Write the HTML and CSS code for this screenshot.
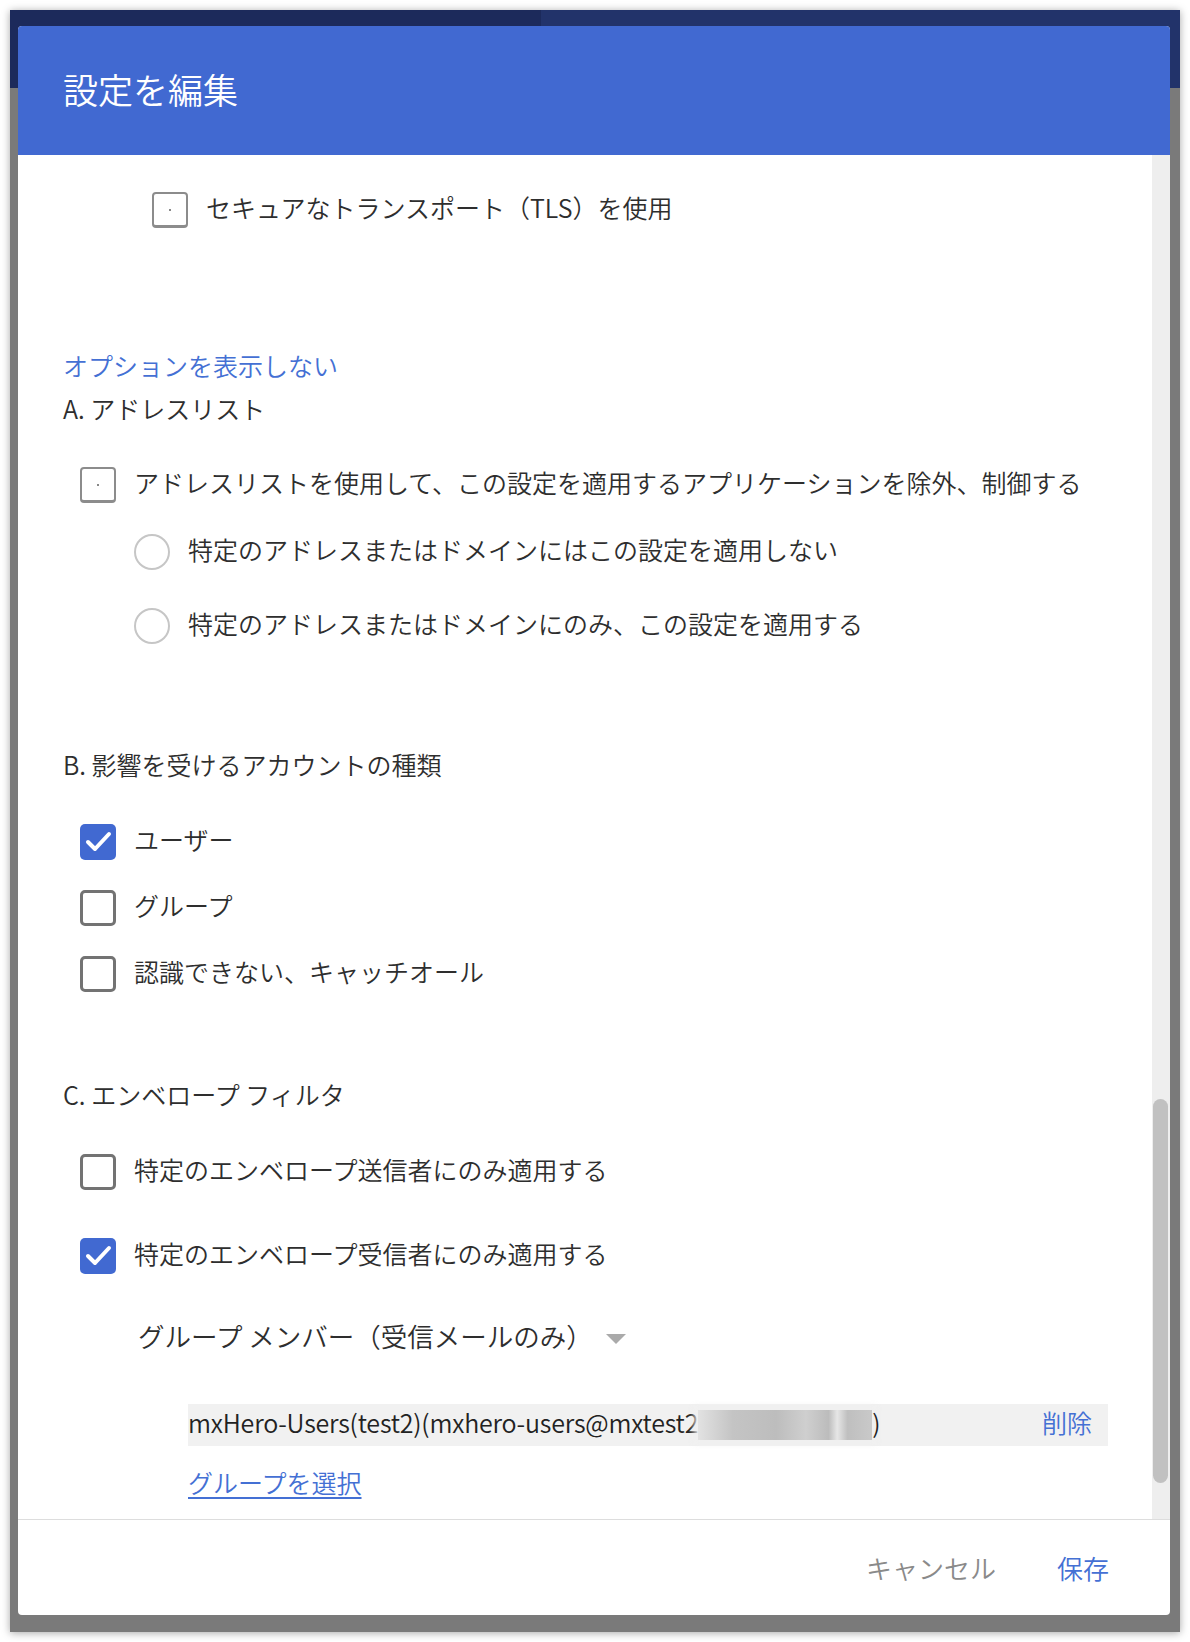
FILE: index.html
```html
<!DOCTYPE html>
<html lang="ja">
  <head>
    <meta http-equiv="Content-Type" content="text/html; charset=utf-8" />
    <title>設定を編集</title>
    <link rel="stylesheet" href="styles.css">
  </head>
  <body>
    <div class="window">
      <div class="dialog">
        <div class="dialog-header"><span class="text">設定を編集</span></div>
        <div class="dialog-main">
          <div class="dialog-content">
            <div class="row row-tls">
              <span class="checkbox checkbox-plain"></span>
              <span class="text">セキュアなトランスポート（TLS）を使用</span>
            </div>

            <a class="row link link-options"><span class="text">オプションを表示しない</span></a>

            <div class="row heading heading-a"><span class="text">A. アドレスリスト</span></div>
            <div class="row row-check gap-38">
              <span class="checkbox checkbox-plain"></span>
              <span class="text">アドレスリストを使用して、この設定を適用するアプリケーションを除外、制御する</span>
            </div>
            <div class="row row-radio gap-31">
              <span class="radio"></span>
              <span class="text">特定のアドレスまたはドメインにはこの設定を適用しない</span>
            </div>
            <div class="row row-radio gap-38">
              <span class="radio"></span>
              <span class="text">特定のアドレスまたはドメインにのみ、この設定を適用する</span>
            </div>

            <div class="row heading heading-b"><span class="text">B. 影響を受けるアカウントの種類</span></div>
            <div class="row row-check gap-39">
              <span class="checkbox checkbox-on">
                <svg viewBox="0 0 36 36" width="36" height="36"><path d="M8 18 L15 25 L29 10" /></svg>
              </span>
              <span class="text">ユーザー</span>
            </div>
            <div class="row row-check gap-30">
              <span class="checkbox"></span>
              <span class="text">グループ</span>
            </div>
            <div class="row row-check gap-30">
              <span class="checkbox"></span>
              <span class="text">認識できない、キャッチオール</span>
            </div>

            <div class="row heading heading-c"><span class="text">C. エンベロープ フィルタ</span></div>
            <div class="row row-check gap-39">
              <span class="checkbox"></span>
              <span class="text">特定のエンベロープ送信者にのみ適用する</span>
            </div>
            <div class="row row-check gap-48">
              <span class="checkbox checkbox-on">
                <svg viewBox="0 0 36 36" width="36" height="36"><path d="M8 18 L15 25 L29 10" /></svg>
              </span>
              <span class="text">特定のエンベロープ受信者にのみ適用する</span>
            </div>

            <div class="row select gap-46">
              <span class="text">グループ メンバー（受信メールのみ）</span>
              <span class="select-arrow"></span>
            </div>

            <div class="member">
              <span class="member-name text">mxHero-Users(test2)(mxhero-users@mxtest2<span class="blur"></span>)</span>
              <a class="link text">削除</a>
            </div>
            <a class="row link link-pick"><span class="text">グループを選択</span></a>
          </div>
          <div class="scrollbar">
            <div class="scrollbar-thumb"></div>
          </div>
        </div>
        <div class="dialog-footer">
          <span class="button button-cancel text">キャンセル</span>
          <span class="button button-save text">保存</span>
        </div>
      </div>
    </div>
  </body>
</html>
```

FILE: styles.css
```css
html,
body {
  margin: 0;
  padding: 0;
}
body {
  background-color: white;
  font-family: "Noto Sans CJK JP", "Noto Sans", sans-serif;
  font-weight: 350;
  color: #2e2e2e;
}
.window {
  box-sizing: border-box;
  margin: 10px;
  width: 1170px;
  height: 1622px;
  padding: 16px 10px 17px 8px;
  background: linear-gradient(to right, #1c2a5b 531px, #22336a 531px) top left / 100% 78px no-repeat,
    #7a7a7a;
  box-shadow: 0 1px 8px rgba(0, 0, 0, 0.35);
}
.dialog {
  display: flex;
  flex-direction: column;
  height: 100%;
  background-color: white;
  border-radius: 4px;
  overflow: hidden;
}
.dialog-header {
  flex: none;
  height: 129px;
  display: flex;
  align-items: center;
  padding-left: 45px;
  background-color: #4169d1;
  color: white;
  font-size: 35px;
}
.dialog-header .text {
  margin-bottom: 4px;
}
.dialog-main {
  flex: none;
  display: flex;
  height: 1364px;
}
.dialog-content {
  flex: 1;
  padding: 37px 44px 0 45px;
  overflow: hidden;
}
.scrollbar {
  width: 18px;
  background-color: #eeeeee;
}
.scrollbar-thumb {
  margin: 944px 2px 0 1px;
  height: 384px;
  background-color: #c1c1c1;
  border-radius: 8px;
}
.dialog-footer {
  flex: 1;
  display: flex;
  justify-content: flex-end;
  align-items: center;
  gap: 61px;
  padding: 5px 61px 0 0;
  border-top: 1px solid #dddddd;
  font-size: 26px;
}
.button-cancel {
  color: #8a8a8a;
}
.button-save {
  color: #4470d4;
}

/* glyphs of the font sit low, lift them a bit */
.text {
  margin-bottom: 6px;
}

/* rows */
.row {
  display: flex;
  align-items: center;
  height: 36px;
  font-size: 25px;
}
.row-tls {
  padding-left: 89px;
}
.row-check {
  padding-left: 17px;
}
.row-radio {
  padding-left: 71px;
}
.link {
  color: #4470d4;
  text-decoration: none;
}
.link-options {
  margin-top: 122px;
}
.heading-a {
  margin-top: 7px;
}
.heading-b {
  margin-top: 105px;
}
.heading-c {
  margin-top: 87px;
}
.gap-30 {
  margin-top: 30px;
}
.gap-31 {
  margin-top: 31px;
}
.gap-38 {
  margin-top: 38px;
}
.gap-39 {
  margin-top: 39px;
}
.gap-46 {
  margin-top: 46px;
}
.gap-48 {
  margin-top: 48px;
}

/* controls */
.checkbox {
  flex: none;
  box-sizing: border-box;
  width: 36px;
  height: 36px;
  margin-right: 18px;
  border: 3px solid #737373;
  border-radius: 5px;
  display: flex;
  align-items: center;
  justify-content: center;
}
.checkbox-plain {
  border: 2px solid #8c8c8c;
  border-bottom-width: 3px;
  border-radius: 4px;
}
.checkbox-plain::after {
  content: "";
  width: 2px;
  height: 2px;
  background-color: #888;
}
.checkbox-on {
  border: none;
  background-color: #4169d1;
}
.checkbox-on svg {
  fill: none;
  stroke: white;
  stroke-width: 4;
  stroke-linecap: round;
  stroke-linejoin: round;
}
.radio {
  flex: none;
  box-sizing: border-box;
  width: 36px;
  height: 36px;
  margin-right: 18px;
  border: 2px solid #c6c6c6;
  border-radius: 50%;
}
.select {
  padding-left: 75px;
  font-size: 26.5px;
}
.select-arrow {
  margin: 2px 0 0 13px;
  border-left: 10px solid transparent;
  border-right: 10px solid transparent;
  border-top: 10px solid #aaaaaa;
}

/* member list */
.member {
  margin: 48px 0 0 125px;
  height: 42px;
  display: flex;
  align-items: center;
  justify-content: space-between;
  padding-right: 16px;
  background-color: #f1f1f1;
  font-size: 25px;
}
.member-name {
  display: flex;
  align-items: center;
  color: #222;
  letter-spacing: -0.2px;
}
.blur {
  display: inline-block;
  width: 174px;
  height: 30px;
  margin-top: 6px;
  background: linear-gradient(to right, #e2e2e2 0, #c4c4c4 20%, #bdbdbd 45%, #cfcfcf 62%, #bcbcbc 75%, #e6e6e6 80%, #bfbfbf 86%, #c9c9c9 100%);
  box-shadow: 0 0 6px 4px rgba(240, 240, 240, 0.9);
}
.link-pick {
  display: flex;
  width: max-content;
  margin: 21px 0 0 125px;
  text-decoration: underline;
  text-underline-offset: 4px;
}
```
